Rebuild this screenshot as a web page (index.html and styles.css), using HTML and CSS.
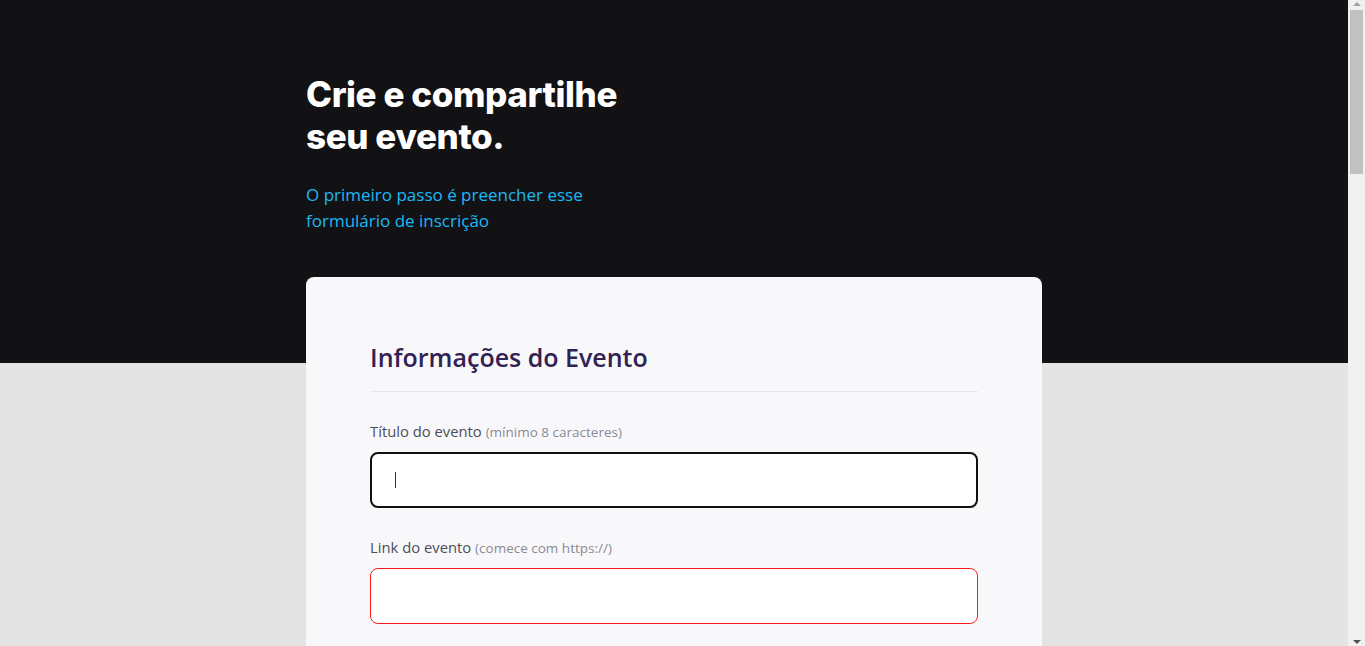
FILE: index.html
```html
<!DOCTYPE html>
<html lang="pt-BR">
<head>
<meta charset="utf-8">
<title>Crie e compartilhe seu evento</title>
<link rel="stylesheet" href="styles.css">
</head>
<body>
<header class="hero">
  <div class="container">
    <h1 class="hero-title">Crie e compartilhe<br>seu evento.</h1>
    <p class="hero-sub">O primeiro passo é preencher esse<br>formulário de inscrição</p>
  </div>
</header>
<main class="container">
  <form class="card">
    <fieldset class="group">
      <legend class="group-title">Informações do Evento</legend>
      <div class="field">
        <label class="label" for="title">Título do evento <span class="hint">(mínimo 8 caracteres)</span></label>
        <div class="input-wrap">
          <input class="input input-focus" id="title" type="text">
          <span class="caret"></span>
        </div>
      </div>
      <div class="field">
        <label class="label" for="link">Link do evento <span class="hint">(comece com https://)</span></label>
        <input class="input input-error" id="link" type="text">
      </div>
      <div class="field">
        <label class="label" for="desc">Descrição do evento</label>
        <textarea class="input textarea" id="desc"></textarea>
      </div>
      <div class="field">
        <label class="label" for="date">Data</label>
        <input class="input" id="date" type="text">
      </div>
      <div class="field">
        <label class="label" for="hour">Horário</label>
        <input class="input" id="hour" type="text">
      </div>
      <div class="field">
        <label class="label" for="place">Local</label>
        <input class="input" id="place" type="text">
      </div>
    </fieldset>
    <fieldset class="group">
      <legend class="group-title">Informações do Organizador</legend>
      <div class="field">
        <label class="label" for="name">Nome</label>
        <input class="input" id="name" type="text">
      </div>
      <div class="field">
        <label class="label" for="email">E-mail</label>
        <input class="input" id="email" type="text">
      </div>
      <div class="field">
        <label class="label" for="phone">Whatsapp</label>
        <input class="input" id="phone" type="text">
      </div>
      <div class="field">
        <label class="label" for="site">Site</label>
        <input class="input" id="site" type="text">
      </div>
    </fieldset>
    <div class="actions">
      <button class="button" type="button">Cadastrar evento</button>
    </div>
  </form>
</main>
<div class="scrollbar" aria-hidden="true">
  <span class="sb-arrow sb-up"></span>
  <span class="sb-thumb"></span>
  <span class="sb-arrow sb-down"></span>
</div>
</body>
</html>
```

FILE: styles.css
```css
* { box-sizing: border-box; }
html, body { margin: 0; padding: 0; }
body {
  background: #e4e4e4;
  font-family: "Open Sans", "Noto Sans", sans-serif;
  color: #41414d;
  padding-right: 17px;
}
.container {
  max-width: 736px;
  margin: 0 auto;
}
.hero {
  background: #121214;
  height: 363px;
  padding-top: 73px;
}
.hero-title {
  margin: 0;
  font-family: "Inter", "Liberation Sans", sans-serif;
  font-weight: 800;
  font-size: 35px;
  line-height: 42px;
  letter-spacing: -0.4px;
  color: #ffffff;
}
.hero-sub {
  margin: 25px 0 0;
  font-size: 17px;
  line-height: 26px;
  color: #1cb8f5;
}
.card {
  margin: -86px 0 80px;
  background: #f8f8fa;
  border-radius: 8px;
  padding: 64px 64px 80px;
}
.group {
  border: 0;
  margin: 0 0 48px;
  padding: 0;
  min-width: 0;
}
.group-title {
  display: block;
  width: 100%;
  float: left;
  padding: 0 0 18px;
  margin: 0 0 30px;
  border-bottom: 1px solid #e6e6ec;
  font-size: 25px;
  line-height: 32px;
  font-weight: 600;
  color: #322153;
}
.field {
  clear: both;
  display: flex;
  flex-direction: column;
  gap: 10px;
  margin-bottom: 30px;
}
.label {
  font-size: 14.8px;
  line-height: 19px;
  color: #4e4e5a;
}
.hint {
  font-size: 13.5px;
  color: #8a8a96;
}
.input-wrap {
  position: relative;
  display: flex;
  flex-direction: column;
}
.caret {
  position: absolute;
  left: 25px;
  top: 20px;
  width: 1px;
  height: 16px;
  background: #333333;
}
.input {
  height: 56px;
  border: 1px solid #e1e1e6;
  border-radius: 8px;
  background: #ffffff;
  padding: 0 24px;
  font: inherit;
  font-size: 16px;
  outline: none;
}
.input-focus {
  border: 2px solid #111111;
  padding: 0 23px;
}
.input-error {
  border-color: #ff1a1a;
}
.textarea {
  height: 160px;
  resize: none;
  padding-top: 16px;
}
.actions {
  display: flex;
  justify-content: flex-end;
}
.button {
  height: 56px;
  padding: 0 40px;
  border: 0;
  border-radius: 8px;
  background: #04d361;
  color: #ffffff;
  font: inherit;
  font-weight: 700;
  font-size: 16px;
}
.scrollbar {
  position: fixed;
  top: 0;
  right: 0;
  bottom: 0;
  width: 17px;
  background: #f1f1f1;
  display: flex;
  flex-direction: column;
  align-items: center;
}
.sb-arrow {
  width: 0;
  height: 0;
  border-left: 4px solid transparent;
  border-right: 4px solid transparent;
}
.sb-up {
  margin-top: 2px;
  border-bottom: 4px solid #a3a3a3;
}
.sb-thumb {
  margin-top: 4px;
  width: 13px;
  height: 164px;
  background: #c1c1c1;
}
.sb-down {
  margin-top: auto;
  margin-bottom: 2px;
  border-top: 4px solid #505050;
}
```
